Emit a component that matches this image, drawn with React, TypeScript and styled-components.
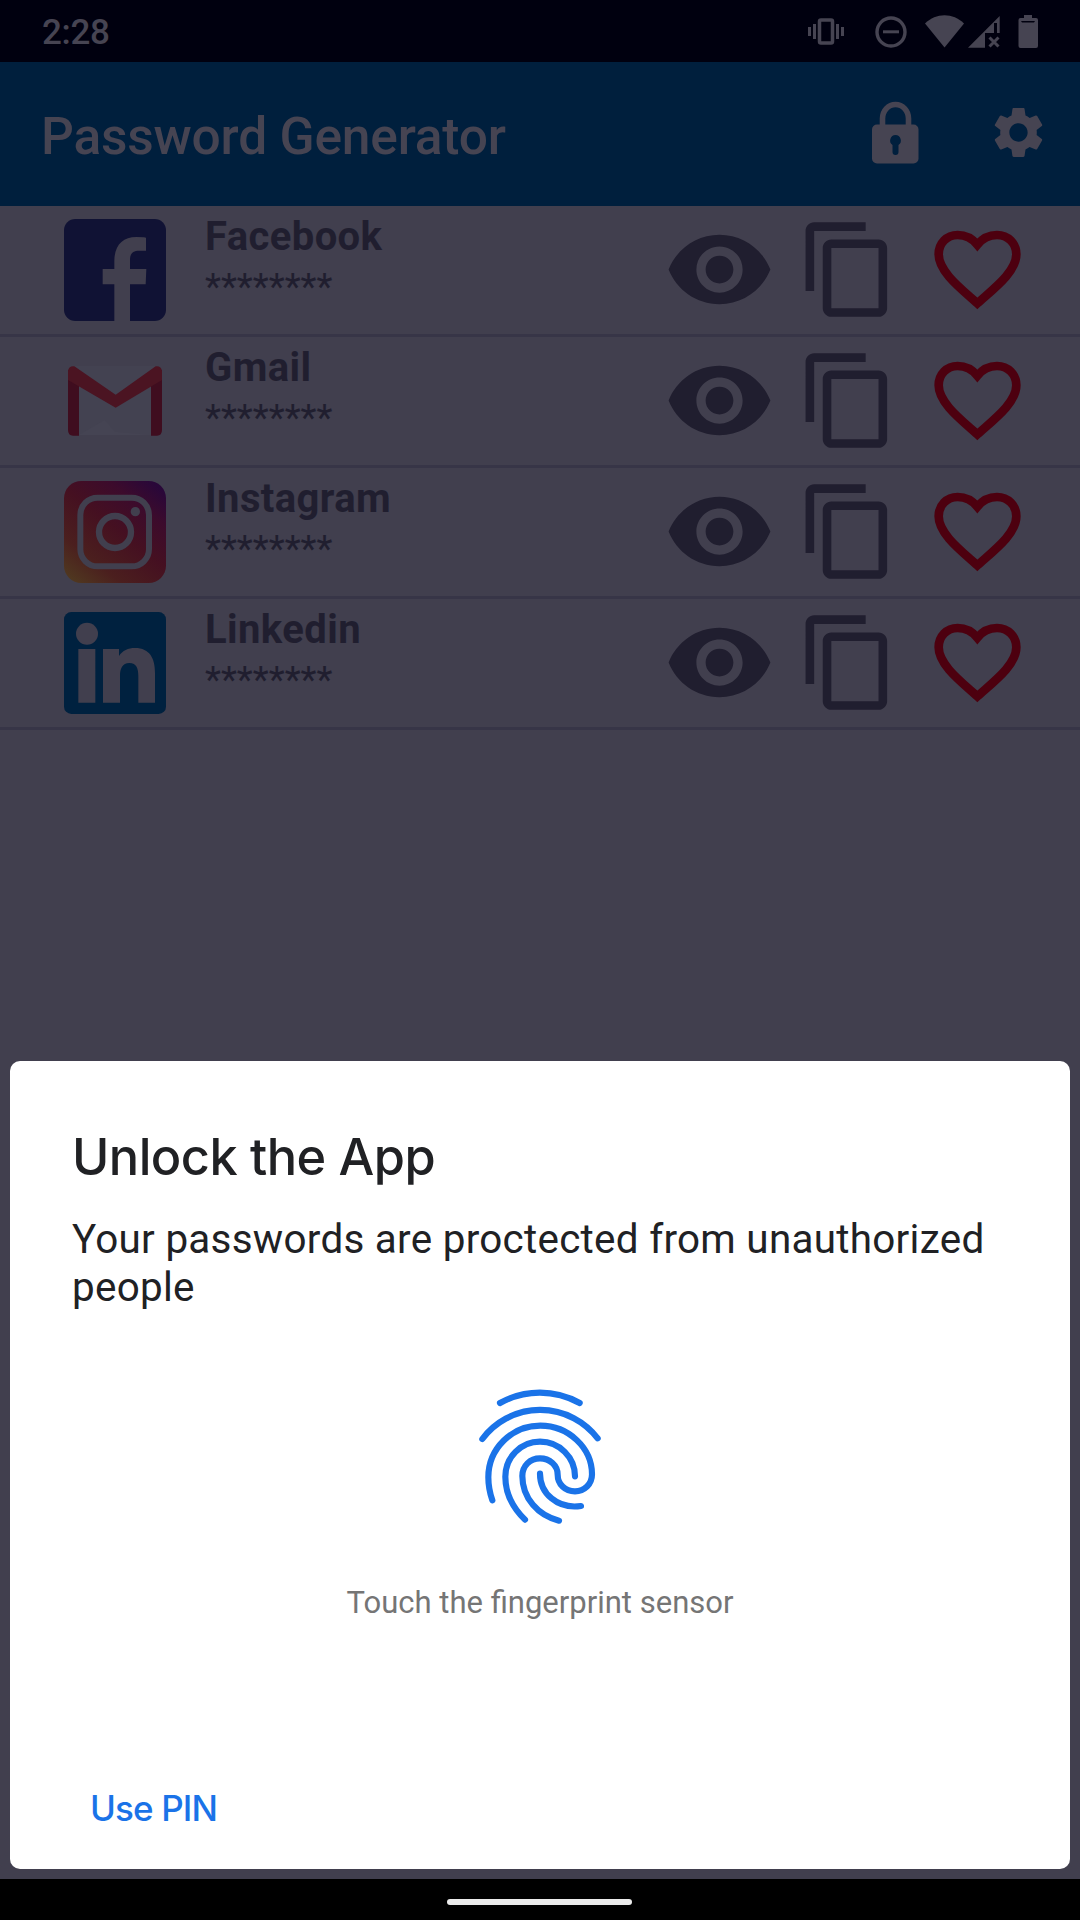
import React from "react";
import styled, { createGlobalStyle } from "styled-components";

const color = {
  status: "#00000f",
  header: "#001f3d",
  page: "#413f4e",
  line: "#373547",
  muted: "#464452",
  ink: "#201e2f",
  heart: "#4d000f",
  blue: "#1a73e8",
};

const GlobalStyle = createGlobalStyle`
  * { box-sizing: border-box; }
  body { margin: 0; background: ${color.page}; }
  svg { display: block; flex: none; }
`;

const Screen = styled.div`
  width: 1080px;
  height: 1920px;
  display: flex;
  flex-direction: column;
  overflow: hidden;
  background: ${color.page};
  font-family: Roboto, "Liberation Sans", sans-serif;
`;

const StatusBar = styled.div`
  height: 62px;
  flex: none;
  display: flex;
  align-items: center;
  justify-content: space-between;
  padding: 0 40px 0 42px;
  background: ${color.status};
  color: ${color.muted};
`;

const Clock = styled.span`
  font-size: 35px;
  font-weight: 500;
  line-height: 42px;
  padding-top: 3px;
  letter-spacing: -0.3px;
`;

const Header = styled.header`
  height: 144px;
  flex: none;
  display: flex;
  align-items: center;
  padding: 0 31px 0 41px;
  background: ${color.header};
  color: ${color.muted};
`;

const Title = styled.h1`
  margin: 0;
  flex: 1;
  font-size: 51.5px;
  font-weight: 500;
  line-height: 60px;
  letter-spacing: -0.2px;
  padding-top: 6px;
`;

const HeaderIcons = styled.div`
  display: flex;
  align-items: center;
  gap: 69px;
  padding-bottom: 3px;
`;

const List = styled.ul`
  margin: 0;
  padding: 0;
  list-style: none;
`;

const Row = styled.li`
  height: 131px;
  display: flex;
  align-items: flex-start;
  padding: 0 55px 0 64px;
  border-bottom: 3px solid ${color.line};
`;

const Logo = styled.div`
  margin-top: 13px;
  width: 102px;
  height: 102px;
`;

const Texts = styled.div`
  flex: 1;
  padding: 7px 0 0 39px;
  color: ${color.ink};
`;

const Name = styled.div`
  font-size: 40px;
  font-weight: 700;
  line-height: 47px;
  letter-spacing: 0.4px;
`;

const Secret = styled.div`
  margin-top: 5px;
  font-size: 37px;
  line-height: 43px;
`;

const Actions = styled.div`
  height: 126px;
  display: flex;
  align-items: center;
`;

const Spacer = styled.div`
  flex: 1;
`;

const Dialog = styled.section`
  height: 808px;
  flex: none;
  margin: 0 10px 10px;
  padding: 66px 62px 0;
  display: flex;
  flex-direction: column;
  border-radius: 10px;
  background: #fff;
  color: #202124;
`;

const DialogTitle = styled.h2`
  margin: 0;
  font-family: Inter, Roboto, sans-serif;
  font-size: 50.5px;
  font-weight: 500;
  line-height: 60px;
  letter-spacing: -0.55px;
`;

const DialogText = styled.p`
  margin: 29px 0 0;
  font-size: 40.4px;
  line-height: 48px;
  letter-spacing: 0.28px;
`;

const Sensor = styled.div`
  margin-top: 58px;
  display: flex;
  flex-direction: column;
  align-items: center;
`;

const Hint = styled.div`
  margin-top: 45px;
  font-size: 31px;
  line-height: 36px;
  color: #757575;
`;

const PinButton = styled.button`
  align-self: flex-start;
  margin: 165px 0 0 18px;
  padding: 0;
  border: 0;
  background: none;
  color: ${color.blue};
  font-family: Inter, Roboto, sans-serif;
  font-size: 35px;
  font-weight: 500;
  line-height: 44px;
  letter-spacing: -0.85px;
`;

const NavBar = styled.div`
  height: 41px;
  flex: none;
  display: flex;
  justify-content: center;
  padding: 20px 2px 0 0;
  background: #000;
`;

const Pill = styled.div`
  width: 185px;
  height: 6px;
  border-radius: 3px;
  background: #ebebeb;
`;

const StatusIcons = () => (
  <svg width="236" height="36" viewBox="804 12 236 36" fill={color.muted}>
    <path d="M808 26h3v9h-3zM813 23h3v15h-3zM836 23h3v15h-3zM841 26h3v9h-3z" />
    <rect x="819.5" y="19" width="13" height="23" rx="1.5" fill="none" stroke={color.muted} strokeWidth="3.5" />
    <circle cx="891" cy="31" r="14" fill="none" stroke={color.muted} strokeWidth="3.4" />
    <path d="M883 29.3h16v3h-16z" />
    <path d="M925 22.5C936 11.500 953 11.500 964 22.500L944.500 46.500z" />
    <path d="M968 46.700L999.700 15V32H997V22H994V32H985V46.700z" />
    <path d="M989.500 36.500l9 9m0-9l-9 9" stroke={color.muted} strokeWidth="3" />
    <path d="M1024 14h8v3h4a2 2 0 0 1 2 2v26a2 2 0 0 1-2 2h-15.500a2 2 0 0 1-2-2v-26a2 2 0 0 1 2-2h3.500z" />
    <path d="M1021 20h14l-1 1.500h-12z" fill={color.status} />
  </svg>
);

const LockIcon = () => (
  <svg width="47" height="63" viewBox="0 0 47 63">
    <path d="M10.500 28V17.500a13 14 0 0 1 26 0V28" fill="none" stroke={color.muted} strokeWidth="5.600" />
    <rect y="23.500" width="46.500" height="39" rx="5" fill={color.muted} />
    <path d="M23.500 34a5.500 5.500 0 0 1 3 10v7a3 3 0 0 1-6 0v-7a5.500 5.500 0 0 1 3-10z" fill={color.header} />
  </svg>
);

const GearIcon = () => (
  <svg width="61" height="61" viewBox="0 0 24 24" fill={color.muted}>
    <path d="M19.140 12.940c.040-.300.060-.610.060-.940 0-.320-.020-.640-.070-.940l2.030-1.580c.180-.140.230-.410.120-.610l-1.920-3.320c-.120-.220-.370-.290-.590-.220l-2.390.960c-.500-.380-1.030-.700-1.620-.940L14.400 2.810c-.040-.240-.240-.410-.480-.410h-3.840c-.240 0-.430.170-.470.410L9.250 5.350c-.590.240-1.130.570-1.620.940l-2.390-.960c-.220-.080-.470 0-.590.220L2.740 8.870c-.120.210-.080.470.120.610l2.030 1.580c-.050.300-.090.630-.090.940s.020.640.070.940l-2.030 1.580c-.180.140-.230.410-.120.610l1.920 3.320c.120.220.370.290.590.220l2.390-.960c.500.380 1.030.700 1.620.940l.360 2.540c.050.240.240.410.480.410h3.840c.240 0 .440-.170.470-.410l.360-2.540c.590-.240 1.130-.560 1.620-.940l2.390.960c.220.080.470 0 .590-.220l1.920-3.320c.120-.220.070-.470-.120-.610l-2.010-1.580zM12 15.600c-1.980 0-3.600-1.620-3.600-3.600s1.620-3.600 3.600-3.600 3.600 1.620 3.600 3.600-1.620 3.600-3.600 3.600z" />
  </svg>
);

const FacebookLogo = () => (
  <svg width="102" height="102" viewBox="0 0 306 306">
    <rect width="306" height="306" rx="34" fill="#101234" />
    <path d="M151 306V196h-35v-46h35v-24c0-46 24-72 66-72q29 0 29 3v38h-20c-20 0-28 9-28 28v27h49l-2 46h-47v110z" fill={color.page} />
  </svg>
);

const GmailLogo = () => (
  <svg width="102" height="102" viewBox="0 0 306 306">
    <path d="M28 48H278V255H28z" fill="#434251" />
    <path d="M44 255L122 210 153 245 262 255z" fill="#454453" />
    <path d="M12 60V240q0 17 15 17H45V80zM294 60V240q0 17-15 17H261V80z" fill="#3f0d1f" />
    <path d="M12 64q2-17 19-15L155 134 275 49q17-2 19 15V90L155 173 12 90z" fill="#4b1422" />
  </svg>
);

const InstagramLogo = () => (
  <svg width="102" height="102" viewBox="0 0 306 306">
    <defs>
      <linearGradient id="insta" x1="0.050" y1="1" x2="0.850" y2="0">
        <stop offset="0" stopColor="#503b20" />
        <stop offset="0.250" stopColor="#4b1f1e" />
        <stop offset="0.550" stopColor="#451021" />
        <stop offset="0.800" stopColor="#3c0b2c" />
        <stop offset="1" stopColor="#290739" />
      </linearGradient>
    </defs>
    <rect width="306" height="306" rx="52" fill="url(#insta)" />
    <rect x="49" y="50" width="206" height="206" rx="52" fill="none" stroke={color.page} strokeWidth="18" />
    <circle cx="153" cy="153" r="48" fill="none" stroke={color.page} strokeWidth="19" />
    <circle cx="214" cy="92" r="14" fill={color.page} />
  </svg>
);

const LinkedinLogo = () => (
  <svg width="102" height="102" viewBox="0 0 306 306">
    <rect width="306" height="306" rx="22" fill="#00213f" />
    <circle cx="69" cy="65" r="33" fill={color.page} />
    <path d="M43 111H94V272H43zM117 111H165V132C176 116 192 108 213 108C258 108 273 140 273 183V272H223V193C223 170 218 153 196 153C175 153 168 170 168 192V272H117z" fill={color.page} />
  </svg>
);

const EyeIcon = () => (
  <svg width="111" height="111" viewBox="0 0 24 24" fill={color.ink}>
    <path d="M12 4.500C7 4.500 2.730 7.610 1 12c1.730 4.390 6 7.500 11 7.500s9.270-3.110 11-7.500c-1.730-4.390-6-7.500-11-7.500zM12 17c-2.760 0-5-2.240-5-5s2.240-5 5-5 5 2.240 5 5-2.240 5-5 5zm0-8c-1.660 0-3 1.340-3 3s1.340 3 3 3 3-1.340 3-3-1.340-3-3-3z" />
  </svg>
);

const CopySvg = styled.svg`
  margin: 0 28px 0 22px;
`;

const CopyIcon = () => (
  <CopySvg width="103" height="103" viewBox="0 0 24 24" fill={color.ink}>
    <path d="M16 1H4c-1.100 0-2 .900-2 2v14h2V3h12V1zm3 4H8c-1.100 0-2 .900-2 2v14c0 1.100.900 2 2 2h11c1.100 0 2-.900 2-2V7c0-1.100-.900-2-2-2zm0 16H8V7h11v14z" />
  </CopySvg>
);

const HeartIcon = () => (
  <svg width="97" height="92" viewBox="0 0 291 276">
    <path
      d="M148 241C104 201 32 148 32 94C32 61 56 36 89 36C114 36 134 48 148 65C162 48 182 36 207 36C240 36 265 61 265 94C265 148 192 201 148 241Z"
      fill="none"
      stroke={color.heart}
      strokeWidth="26"
    />
  </svg>
);

const FingerprintIcon = () => (
  <svg width="160" height="170" viewBox="0 0 480 510" fill="none" stroke={color.blue} strokeWidth="18.500" strokeLinecap="round">
    <path d="M120 99A244 244 0 0 1 359 99" />
    <path d="M67 207A216.500 216.500 0 0 1 413 205" />
    <path d="M97 391C88 365 85 345 85 322A156 155 0 0 1 241 167C326 167 396 234 396 313C396 343 373 364 345 364C315 364 293 342 293 314C293 286 269 265 240 265C210 265 187 288 187 318C187 385 235 437 297 452" />
    <path d="M195 449C155 410 136 367 136 320A104 105 0 0 1 240 215C298 215 345 262 345 319" />
    <path d="M240 311C240 370 292 418 363 408" />
  </svg>
);

const accounts = [
  { name: "Facebook", logo: <FacebookLogo /> },
  { name: "Gmail", logo: <GmailLogo /> },
  { name: "Instagram", logo: <InstagramLogo /> },
  { name: "Linkedin", logo: <LinkedinLogo /> },
];

export default function App() {
  return (
    <>
      <GlobalStyle />
      <Screen>
        <StatusBar>
          <Clock>2:28</Clock>
          <StatusIcons />
        </StatusBar>
        <Header>
          <Title>Password Generator</Title>
          <HeaderIcons>
            <LockIcon />
            <GearIcon />
          </HeaderIcons>
        </Header>
        <List>
          {accounts.map((a) => (
            <Row key={a.name}>
              <Logo>{a.logo}</Logo>
              <Texts>
                <Name>{a.name}</Name>
                <Secret>********</Secret>
              </Texts>
              <Actions>
                <EyeIcon />
                <CopyIcon />
                <HeartIcon />
              </Actions>
            </Row>
          ))}
        </List>
        <Spacer />
        <Dialog>
          <DialogTitle>Unlock the App</DialogTitle>
          <DialogText>Your passwords are proctected from unauthorized people</DialogText>
          <Sensor>
            <FingerprintIcon />
            <Hint>Touch the fingerprint sensor</Hint>
          </Sensor>
          <PinButton>Use PIN</PinButton>
        </Dialog>
        <NavBar>
          <Pill />
        </NavBar>
      </Screen>
    </>
  );
}
